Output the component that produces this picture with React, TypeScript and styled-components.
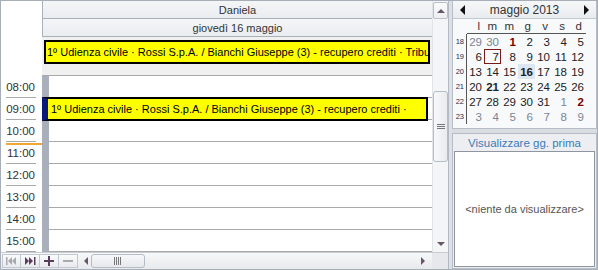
import styled, { createGlobalStyle } from 'styled-components';

const GlobalStyle = createGlobalStyle`
  html, body {
    margin: 0;
    padding: 0;
    background: #ffffff;
  }
  * {
    box-sizing: border-box;
  }
`;

const Frame = styled.div`
  width: 598px;
  height: 270px;
  border: 1px solid #a7aeb8;
  display: flex;
  background: #d9dde2;
  font-family: 'Liberation Sans', Arial, sans-serif;
  font-size: 11px;
  color: #222;
  overflow: hidden;
`;

/* ---------- scheduler ---------- */

const Scheduler = styled.div`
  width: 447px;
  display: grid;
  grid-template-columns: 431px 16px;
  grid-template-rows: 251px 17px;
  background: #ffffff;
`;

const Main = styled.div`
  display: flex;
  flex-direction: column;
  position: relative;
`;

const TopRow = styled.div`
  display: flex;
`;

const Corner = styled.div`
  width: 41px;
  background: #ffffff;
  flex-shrink: 0;
`;

const HeaderStack = styled.div`
  flex: 1;
  display: flex;
  flex-direction: column;
  border-left: 1px solid #aab1bb;
`;

const HeaderCell = styled.div`
  height: 18px;
  display: flex;
  align-items: center;
  justify-content: center;
  background: linear-gradient(#f4f5f7, #eaedf0);
  border-bottom: 1px solid #aab1bb;
  color: #333;
`;

const AllDay = styled.div`
  flex: 1;
  height: 39px;
  background: #f0f0f0;
  border-bottom: 1px solid #a9a9a9;
  padding: 3px 0 0 2px;
`;

const EventBox = styled.div<{ $tall?: boolean }>`
  height: 24px;
  width: 386px;
  background: #ffff00;
  border: 2px solid #000;
  border-left: ${(p) => (p.$tall ? '6px solid #0a1a78' : '2px solid #000')};
  padding: ${(p) => (p.$tall ? '3px 0 0 3px' : '3px 0 0 1px')};
  font-size: 11px;
  line-height: 14px;
  color: #000;
  overflow: hidden;
  white-space: ${(p) => (p.$tall ? 'normal' : 'nowrap')};
  word-break: break-word;
`;

const GridEvent = styled(EventBox)`
  position: absolute;
  left: 41px;
  top: 96px;
  width: 386px;
  height: 24px;
`;

const Body = styled.div`
  display: flex;
  height: 176px;
`;

const Ruler = styled.div`
  width: 41px;
  background: #ffffff;
  display: flex;
  flex-direction: column;
  position: relative;
`;

const RulerSlot = styled.div`
  height: 22px;
  margin: 0 6px 0 5px;
  border-bottom: 1px solid #a9a9a9;
  display: flex;
  align-items: center;
  justify-content: flex-end;
  padding-right: 1px;
  font-size: 11.5px;
  color: #333;
`;

const NowLine = styled.div`
  position: absolute;
  left: 5px;
  right: 0;
  top: 67px;
  height: 2px;
  background: #f2a735;
`;

const BusyBar = styled.div`
  width: 7px;
  background: #a9b0bb;
`;

const Grid = styled.div`
  flex: 1;
  display: flex;
  flex-direction: column;
  background: #ffffff;
`;

const GridSlot = styled.div`
  height: 22px;
  border-bottom: 1px solid #a9a9a9;
`;

/* ---------- scrollbars ---------- */

const VScroll = styled.div`
  background: #f4f5f6;
  border-left: 1px solid #e2e4e7;
  display: flex;
  flex-direction: column;
  align-items: center;
  padding-top: 1px;
`;

const ScrollButton = styled.div<{ $boxed?: boolean }>`
  width: 15px;
  height: 17px;
  display: flex;
  align-items: center;
  justify-content: center;
  border: 1px solid ${(p) => (p.$boxed ? '#b9c0c9' : 'transparent')};
  border-radius: 2px;
  background: ${(p) => (p.$boxed ? 'linear-gradient(#fbfbfc, #eceef1)' : 'transparent')};
`;

const VThumb = styled.div`
  margin-top: 72px;
  width: 15px;
  height: 71px;
  border: 1px solid #b4bcc6;
  border-radius: 3px;
  background: linear-gradient(90deg, #f7f8f9, #e9ebee);
  display: flex;
  align-items: center;
  justify-content: center;
`;

const Spacer = styled.div`
  flex: 1;
`;

const BottomBar = styled.div`
  display: flex;
  align-items: stretch;
  background: linear-gradient(#f7f8f9, #e7e9ec);
  border-top: 1px solid #c9cdd3;
  padding: 1px 0 1px 1px;
`;

const NavButton = styled.div`
  width: 19px;
  display: flex;
  align-items: center;
  justify-content: center;
  border: 1px solid #c2c8cf;
  border-left: none;
  background: linear-gradient(#fafbfb, #e8eaed);
  &:first-child {
    border-left: 1px solid #c2c8cf;
  }
`;

const HScroll = styled.div`
  flex: 1;
  display: flex;
  align-items: center;
  padding: 0 7px 0 6px;
`;

const HThumb = styled.div`
  margin-left: 3px;
  width: 54px;
  height: 14px;
  border: 1px solid #b4bcc6;
  border-radius: 3px;
  background: linear-gradient(#f7f8f9, #e6e8eb);
  display: flex;
  align-items: center;
  justify-content: center;
`;

const BarCorner = styled.div`
  background: #e6e8eb;
  border-top: 1px solid #c9cdd3;
`;

/* ---------- right panel ---------- */

const Splitter = styled.div`
  width: 4px;
  background: #dde1e6;
  border-left: 1px solid #b3bac3;
`;

const Side = styled.div`
  flex: 1;
  display: flex;
  flex-direction: column;
  background: #d9dde2;
`;

const Calendar = styled.div`
  height: 128px;
  background: #f8f9fa;
  border: 1px solid #b7bdc6;
  border-top: none;
`;

const CalHeader = styled.div`
  height: 18px;
  display: flex;
  align-items: center;
  justify-content: space-between;
  padding: 0 7px;
  background: linear-gradient(#f6f7f8, #e9ecef);
  border-bottom: 1px solid #c3c9d0;
  font-size: 12px;
  color: #333;
`;

const CalGrid = styled.div`
  display: grid;
  grid-template-columns: 14px repeat(7, 17px);
  grid-auto-rows: 15px;
`;

const DayName = styled.div`
  display: flex;
  align-items: center;
  justify-content: flex-end;
  padding-right: 4px;
  border-bottom: 1px solid #555;
  font-size: 11.5px;
  line-height: 12px;
  color: #333;
`;

const WeekCell = styled.div<{ $blank?: boolean }>`
  display: flex;
  align-items: center;
  justify-content: flex-end;
  padding-right: 2px;
  border-right: 1px solid ${(p) => (p.$blank ? 'transparent' : '#555')};
  font-size: 7.5px;
  line-height: 8px;
  color: #1f2f4f;
`;

const DayCell = styled.div<{ $other?: boolean; $bold?: boolean; $red?: boolean; $today?: boolean; $boxed?: boolean }>`
  display: flex;
  align-items: center;
  justify-content: flex-end;
  padding-right: 2px;
  font-size: 11.5px;
  line-height: 12px;
  font-weight: ${(p) => (p.$bold ? 700 : 400)};
  color: ${(p) => (p.$red ? '#7a0000' : p.$other ? '#7a8594' : '#222')};
  background: ${(p) => (p.$today ? '#dce7f3' : 'transparent')};
  box-shadow: ${(p) => (p.$boxed ? 'inset 0 0 0 1px #7a1a1a' : 'none')};
`;

const SideGap = styled.div`
  height: 4px;
`;

const Panel = styled.div`
  flex: 1;
  display: flex;
  flex-direction: column;
  background: #eceef1;
  border: 1px solid #b7bdc6;
`;

const PanelTitle = styled.div`
  height: 17px;
  display: flex;
  align-items: center;
  justify-content: center;
  color: #3a7db8;
  font-size: 11.5px;
`;

const PanelBody = styled.div`
  flex: 1;
  margin: 0 1px 1px 1px;
  background: #ffffff;
  border: 1px solid #8f969f;
  display: flex;
  align-items: center;
  justify-content: center;
  color: #555;
  font-size: 11px;
`;

/* ---------- icons ---------- */

const Tri = ({ dir, color, size = 4 }: { dir: 'up' | 'down' | 'left' | 'right'; color: string; size?: number }) => {
  const s = size;
  const pts: Record<string, string> = {
    up: `0,${s} ${s},0 ${s * 2},${s}`,
    down: `0,0 ${s * 2},0 ${s},${s}`,
    left: `${s},0 ${s},${s * 2} 0,${s}`,
    right: `0,0 0,${s * 2} ${s},${s}`,
  };
  const vertical = dir === 'up' || dir === 'down';
  return (
    <svg width={vertical ? s * 2 : s} height={vertical ? s : s * 2}>
      <polygon points={pts[dir]} fill={color} />
    </svg>
  );
};

const Grip = ({ vertical }: { vertical?: boolean }) => (
  <svg width={8} height={vertical ? 6 : 8}>
    {vertical
      ? [0, 2, 4].map((y) => <rect key={y} x={0} y={y} width={8} height={1} fill="#777" />)
      : [0, 2, 4, 6].map((x) => <rect key={x} x={x} y={0} width={1} height={8} fill="#777" />)}
  </svg>
);

const FirstIcon = ({ color }: { color: string }) => (
  <svg width="11" height="8">
    <rect x="0" y="0" width="1.5" height="8" fill={color} />
    <polygon points="6,0 6,8 2,4" fill={color} />
    <polygon points="10,0 10,8 6,4" fill={color} />
  </svg>
);

const LastIcon = ({ color }: { color: string }) => (
  <svg width="11" height="8">
    <polygon points="0,0 0,8 4,4" fill={color} />
    <polygon points="4,0 4,8 8,4" fill={color} />
    <rect x="9" y="0" width="1.5" height="8" fill={color} />
  </svg>
);

const PlusIcon = ({ color }: { color: string }) => (
  <svg width="10" height="10">
    <rect x="0" y="4" width="10" height="2" fill={color} />
    <rect x="4" y="0" width="2" height="10" fill={color} />
  </svg>
);

const MinusIcon = ({ color }: { color: string }) => (
  <svg width="10" height="10">
    <rect x="0" y="4" width="10" height="2" fill={color} />
  </svg>
);

/* ---------- data ---------- */

const hours = ['08:00', '09:00', '10:00', '11:00', '12:00', '13:00', '14:00', '15:00'];
const dayNames = ['l', 'm', 'm', 'g', 'v', 's', 'd'];

type Day = { n: number; other?: boolean; bold?: boolean; red?: boolean; today?: boolean; boxed?: boolean };

const weeks: Array<{ wk: number; days: Day[] }> = [
  {
    wk: 18,
    days: [{ n: 29, other: true }, { n: 30, other: true }, { n: 1, bold: true, red: true }, { n: 2 }, { n: 3 }, { n: 4 }, { n: 5 }],
  },
  { wk: 19, days: [{ n: 6 }, { n: 7, boxed: true }, { n: 8 }, { n: 9 }, { n: 10 }, { n: 11 }, { n: 12 }] },
  { wk: 20, days: [{ n: 13 }, { n: 14 }, { n: 15 }, { n: 16, bold: true, today: true }, { n: 17 }, { n: 18 }, { n: 19 }] },
  { wk: 21, days: [{ n: 20 }, { n: 21, bold: true }, { n: 22 }, { n: 23 }, { n: 24 }, { n: 25 }, { n: 26 }] },
  {
    wk: 22,
    days: [{ n: 27 }, { n: 28 }, { n: 29 }, { n: 30 }, { n: 31 }, { n: 1, other: true }, { n: 2, bold: true, red: true }],
  },
  { wk: 23, days: [3, 4, 5, 6, 7, 8, 9].map((n) => ({ n, other: true })) },
];

const eventText = '1º Udienza civile · Rossi S.p.A. / Bianchi Giuseppe (3) - recupero crediti · Tribunale di Milano · aula 4';

const App = () => {
  return (
    <>
      <GlobalStyle />
      <Frame>
        <Scheduler>
          <Main>
            <TopRow>
              <Corner />
              <HeaderStack>
                <HeaderCell>Daniela</HeaderCell>
                <HeaderCell>giovedì 16 maggio</HeaderCell>
              </HeaderStack>
            </TopRow>
            <TopRow>
              <Corner />
              <AllDay>
                <EventBox>{eventText}</EventBox>
              </AllDay>
            </TopRow>
            <Body>
              <Ruler>
                {hours.map((h) => (
                  <RulerSlot key={h}>{h}</RulerSlot>
                ))}
                <NowLine />
              </Ruler>
              <BusyBar />
              <Grid>
                {hours.map((h) => (
                  <GridSlot key={h} />
                ))}
              </Grid>
            </Body>
            <GridEvent $tall>{eventText}</GridEvent>
          </Main>
          <VScroll>
            <ScrollButton $boxed>
              <Tri dir="up" color="#6a5468" />
            </ScrollButton>
            <VThumb>
              <Grip vertical />
            </VThumb>
            <Spacer />
            <ScrollButton>
              <Tri dir="down" color="#6a5468" />
            </ScrollButton>
          </VScroll>
          <BottomBar>
            <NavButton>
              <FirstIcon color="#a9a9b0" />
            </NavButton>
            <NavButton>
              <LastIcon color="#5a3d5c" />
            </NavButton>
            <NavButton>
              <PlusIcon color="#5a3d5c" />
            </NavButton>
            <NavButton>
              <MinusIcon color="#a9a9b0" />
            </NavButton>
            <HScroll>
              <Tri dir="left" color="#6a5468" />
              <HThumb>
                <Grip />
              </HThumb>
              <Spacer />
              <Tri dir="right" color="#6a5468" />
            </HScroll>
          </BottomBar>
          <BarCorner />
        </Scheduler>
        <Splitter />
        <Side>
          <Calendar>
            <CalHeader>
              <Tri dir="left" color="#111" size={5} />
              <span>maggio 2013</span>
              <Tri dir="right" color="#111" size={5} />
            </CalHeader>
            <CalGrid>
              <WeekCell $blank />
              {dayNames.map((d, i) => (
                <DayName key={i}>{d}</DayName>
              ))}
              {weeks.map((w) => [
                <WeekCell key={`w${w.wk}`}>{w.wk}</WeekCell>,
                ...w.days.map((d, i) => (
                  <DayCell
                    key={`${w.wk}-${i}`}
                    $other={d.other}
                    $bold={d.bold}
                    $red={d.red}
                    $today={d.today}
                    $boxed={d.boxed}
                  >
                    {d.n}
                  </DayCell>
                )),
              ])}
            </CalGrid>
          </Calendar>
          <SideGap />
          <Panel>
            <PanelTitle>Visualizzare gg. prima</PanelTitle>
            <PanelBody>&lt;niente da visualizzare&gt;</PanelBody>
          </Panel>
        </Side>
      </Frame>
    </>
  );
};

export default App;
